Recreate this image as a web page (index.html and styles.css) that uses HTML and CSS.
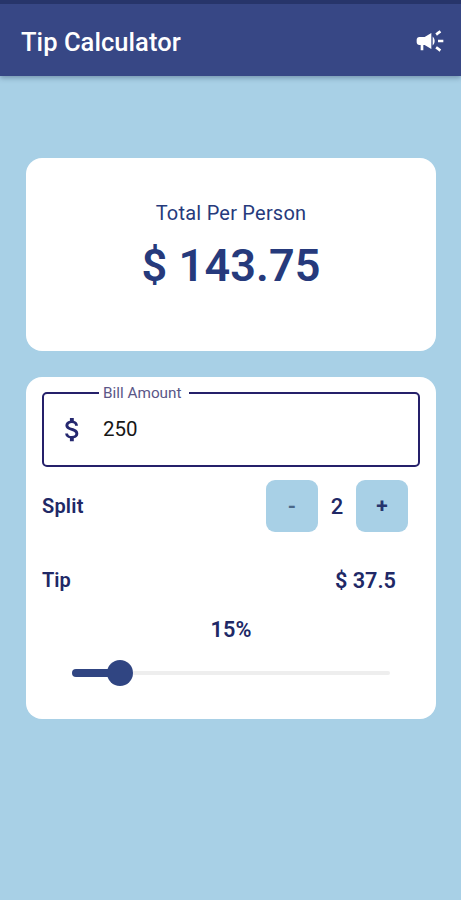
FILE: index.html
```
<!DOCTYPE html>
<html lang="en">
<head>
<meta charset="utf-8">
<title>Tip Calculator</title>
<link rel="stylesheet" href="styles.css">
</head>
<body>
<header class="app-bar">
  <h1 class="title">Tip Calculator</h1>
  <svg class="campaign" viewBox="0 0 24 24" aria-hidden="true"><path d="M18 11v2h4v-2h-4zM16 17.61c.96.71 2.21 1.65 3.2 2.39.4-.53.8-1.07 1.2-1.6-.99-.74-2.24-1.68-3.2-2.4-.4.54-.8 1.08-1.2 1.61zM20.4 5.6c-.4-.53-.8-1.07-1.2-1.6-.99.74-2.24 1.68-3.2 2.4.4.53.8 1.07 1.2 1.6.96-.72 2.21-1.65 3.2-2.4zM4 9c-1.1 0-2 .9-2 2v2c0 1.1.9 2 2 2h1v4h2v-4h1l5 3V6L8 9H4zm11.5 3c0-1.33-.58-2.53-1.5-3.35v6.69c.92-.81 1.5-2.01 1.5-3.34z"/></svg>
</header>
<main class="content">
  <section class="card total">
    <p class="total-label">Total Per Person</p>
    <p class="total-value">$ 143.75</p>
  </section>
  <section class="card form">
    <fieldset class="field">
      <legend class="field-label">Bill Amount</legend>
      <svg class="dollar" viewBox="0 0 24 24" aria-hidden="true"><path d="M11.8 10.9c-2.27-.59-3-1.2-3-2.15 0-1.09 1.01-1.85 2.7-1.85 1.78 0 2.44.85 2.5 2.1h2.21c-.07-1.72-1.12-3.3-3.21-3.81V3h-3v2.16c-1.94.42-3.5 1.68-3.5 3.61 0 2.31 1.91 3.46 4.7 4.13 2.5.6 3 1.48 3 2.41 0 .69-.49 1.79-2.7 1.79-2.06 0-2.87-.92-2.98-2.1h-2.2c.12 2.19 1.76 3.42 3.68 3.83V21h3v-2.15c1.95-.37 3.5-1.5 3.5-3.55 0-2.84-2.43-3.81-4.7-4.4z"/></svg>
      <span class="amount">250</span>
    </fieldset>
    <div class="row split">
      <span class="label">Split</span>
      <button class="step minus">-</button>
      <span class="count">2</span>
      <button class="step">+</button>
    </div>
    <div class="row tip">
      <span class="label">Tip</span>
      <span class="tip-value">$ 37.5</span>
    </div>
    <div class="percent">15%</div>
    <div class="slider">
      <span class="track-on"></span>
      <span class="thumb"></span>
      <span class="track-off"></span>
    </div>
  </section>
</main>
</body>
</html>
```
FILE: styles.css
```
* { box-sizing: border-box; }

body {
  margin: 0;
  height: 900px;
  overflow: hidden;
  background: #a8d0e6;
  color: #24305e;
  font-family: Roboto, "Liberation Sans", sans-serif;
}

p, h1 { margin: 0; }

.app-bar {
  display: flex;
  align-items: center;
  justify-content: space-between;
  height: 76px;
  padding: 2px 15px 0 21px;
  border-top: 4px solid #27356a;
  background: #374785;
  box-shadow: 0 2px 5px rgba(40, 60, 90, .4);
}

.title {
  padding-top: 1px;
  color: #fff;
  font-size: 25.5px;
  font-weight: 500;
  line-height: 30px;
  letter-spacing: .05px;
}

.campaign { width: 32px; height: 32px; fill: #fff; }

.content {
  display: flex;
  flex-direction: column;
  gap: 26px;
  padding: 82px 25px 0 26px;
}

.card { border-radius: 16px; background: #fff; }

.total {
  height: 192.5px;
  padding-top: 42px;
  text-align: center;
  color: #263a7c;
}

.total-label { font-size: 20px; line-height: 26px; letter-spacing: .22px; }

.total-value {
  margin-top: 13px;
  font-size: 45px;
  font-weight: 600;
  line-height: 54px;
  letter-spacing: .1px;
}

.form { height: 342px; padding: 7px 16px 0; color: #202866; }

.field {
  display: flex;
  align-items: center;
  height: 83px;
  margin: 0;
  padding: 0 19px 6px 12px;
  border: 2px solid #25206a;
  border-radius: 5px;
}

.field-label {
  height: 18px;
  margin-left: 43px;
  padding: 0 7px 0 4px;
  color: #5a5687;
  font-size: 15.3px;
  line-height: 18px;
}

.dollar { width: 31px; height: 31px; margin: -1px 0 0 1px; fill: #25286f; }

.amount { margin: -3px 0 0 15px; color: #171717; font-size: 20.5px; }

.row { display: flex; align-items: center; font-size: 20px; font-weight: 600; }

.label { margin-right: auto; }

.split { height: 52px; margin-top: 13px; padding-right: 12px; }

.split .label { letter-spacing: .2px; }

.step {
  width: 52px;
  height: 52px;
  padding: 0;
  border: 0;
  border-radius: 9px;
  background: #a8d0e6;
  color: #27356e;
  font: 700 21px/52px Roboto, sans-serif;
}

.minus { color: #4b6888; }

.count {
  width: 38px;
  padding-top: 1px;
  text-align: center;
  font-size: 22px;
  font-weight: 500;
}

.tip { height: 30px; margin-top: 33px; padding-right: 24px; }

.tip .label { padding-top: 1px; }

.tip-value { padding-top: 2px; font-size: 21.7px; }

.percent {
  height: 30px;
  margin-top: 20px;
  text-align: center;
  font-size: 21.7px;
  font-weight: 600;
  line-height: 30px;
}

.slider {
  display: flex;
  align-items: center;
  height: 26px;
  margin: 15px 30px 0;
}

.track-on {
  width: 38px;
  height: 8px;
  margin-right: -3px;
  border-radius: 4px 0 0 4px;
  background: #304582;
}

.thumb { width: 26px; height: 26px; border-radius: 50%; background: #304582; }

.track-off { flex: 1; height: 4px; border-radius: 0 2px 2px 0; background: #eee; }
```
